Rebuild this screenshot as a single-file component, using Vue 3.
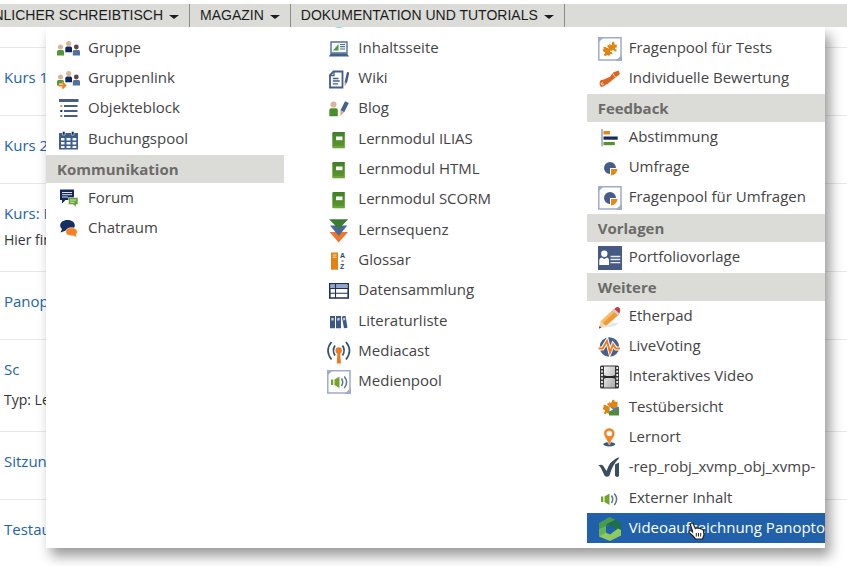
<script setup>
const navItems = [
  { label: 'PERSÖNLICHER SCHREIBTISCH', lead: true },
  { label: 'MAGAZIN' },
  { label: 'DOKUMENTATION UND TUTORIALS' },
]

const courses = [
  { title: 'Kurs 1' },
  { title: 'Kurs 2' },
  { title: 'Kurs: Medien', text: 'Hier finden Sie' },
  { title: 'Panopto' },
  { title: 'Sc', text: 'Typ: Lernen', property: true },
  { title: 'Sitzung' },
  { title: 'Testaufgabe' },
]

const columns = [
  [
    {
      items: [
        { icon: 'group', label: 'Gruppe' },
        { icon: 'grouplink', label: 'Gruppenlink' },
        { icon: 'block', label: 'Objekteblock' },
        { icon: 'calendar', label: 'Buchungspool' },
      ],
    },
    {
      title: 'Kommunikation',
      items: [
        { icon: 'forum', label: 'Forum' },
        { icon: 'chat', label: 'Chatraum' },
      ],
    },
  ],
  [
    {
      items: [
        { icon: 'page', label: 'Inhaltsseite' },
        { icon: 'wiki', label: 'Wiki' },
        { icon: 'blog', label: 'Blog' },
        { icon: 'book', label: 'Lernmodul ILIAS' },
        { icon: 'book', label: 'Lernmodul HTML' },
        { icon: 'book', label: 'Lernmodul SCORM' },
        { icon: 'sequence', label: 'Lernsequenz' },
        { icon: 'glossary', label: 'Glossar' },
        { icon: 'data', label: 'Datensammlung' },
        { icon: 'literature', label: 'Literaturliste' },
        { icon: 'mediacast', label: 'Mediacast' },
        { icon: 'mediapool', label: 'Medienpool' },
      ],
    },
  ],
  [
    {
      items: [
        { icon: 'testpool', label: 'Fragenpool für Tests' },
        { icon: 'scroll', label: 'Individuelle Bewertung' },
      ],
    },
    {
      title: 'Feedback',
      items: [
        { icon: 'poll', label: 'Abstimmung' },
        { icon: 'survey', label: 'Umfrage' },
        { icon: 'surveypool', label: 'Fragenpool für Umfragen' },
      ],
    },
    {
      title: 'Vorlagen',
      items: [{ icon: 'portfolio', label: 'Portfoliovorlage' }],
    },
    {
      title: 'Weitere',
      items: [
        { icon: 'pencil', label: 'Etherpad' },
        { icon: 'voting', label: 'LiveVoting' },
        { icon: 'film', label: 'Interaktives Video' },
        { icon: 'testview', label: 'Testübersicht' },
        { icon: 'pin', label: 'Lernort' },
        { icon: 'vimp', label: '-rep_robj_xvmp_obj_xvmp-' },
        { icon: 'sound', label: 'Externer Inhalt' },
        { icon: 'panopto', label: 'Videoaufzeichnung Panopto', active: true },
      ],
    },
  ],
]
</script>

<template>
  <svg class="sprite" aria-hidden="true">
    <defs>
      <linearGradient id="g-green" x1="0" y1="0" x2="0" y2="1">
        <stop offset="0" stop-color="#3f7f28" /><stop offset="1" stop-color="#5f9a2c" />
      </linearGradient>
      <linearGradient id="g-film" x1="0" y1="0" x2="1" y2="1">
        <stop offset="0" stop-color="#f4f4f4" /><stop offset="1" stop-color="#a9a9a9" />
      </linearGradient>
      <g id="puzzle" fill="#e08512">
        <path d="M11 6.400 13.200 8.200Q14.600 7.400 13.900 5.900Q14.200 4.400 15.800 4.700Q17 5.600 16.300 7.200Q17.200 8 18.800 7.500V10.500Q17.200 10.300 16.700 11.500Q17 12.600 18.700 12.400L18.200 14.600Q16.500 14.500 15.800 13.200Q14.300 12.600 13.600 14L10.800 12.500Q11.800 10.800 10.200 10.400Q8.800 9.600 9.500 8.200Q10.600 7.500 11.600 8.500Z" />
        <path d="M5 10.200 7.800 9.800Q8.400 11.200 9.900 11L12.600 12.800Q11.300 14 12.400 15Q14.200 14.800 14.500 16.400Q13.800 17.900 12.200 17L11 19.300Q9.800 17.500 8.700 18.200Q7.400 19.600 6 18.300Q5.700 16.900 7.200 16.200Q7.300 14.900 5.200 14.600L4.600 12.600Q6.800 12.400 5 10.200Z" />
      </g>
      <g id="frame">
        <path d="M0.800 0.800H23V23H0.800Z" fill="#fff" stroke="#9dacca" stroke-width="1.500" />
        <path d="M0 0H6L0 6ZM24 24H17.500L24 17.500Z" fill="#9dacca" />
      </g>
      <g id="pie">
        <path d="M12 12V18A6 6 0 1 1 18 12Z" fill="#465d89" />
        <path d="M13 13H19.500A6.500 6.500 0 0 1 13 19.500Z" fill="#e58a17" />
      </g>
      <g id="speaker">
        <path d="M3 9.500H5.300V15H3ZM6.500 9.500 11.500 6.500V18L6.500 15Z" fill="#72a32b" />
        <path d="M13.500 8.500Q16 12.300 13.500 16M16.300 6.500Q21 12.300 16.300 18" fill="none" stroke="#5a7391" stroke-width="1.500" />
      </g>
      <g id="people">
        <circle cx="3.500" cy="10" r="2.500" fill="#dab496" />
        <path d="M0 18.500V14.500Q0 13 1.500 13H5.500Q7 13 7 14.500V18.500Z" fill="#57953a" />
        <circle cx="11.700" cy="6.500" r="2.600" fill="#dab496" />
        <path d="M8.300 15.300V11Q8.300 9.500 10 9.500H13.500Q15 9.500 15 11V15.300Z" fill="#10285e" />
        <circle cx="19.300" cy="10" r="2.400" fill="#5e4547" />
        <path d="M15.800 18.500V14.500Q15.800 13 17.300 13H21.500Q23 13 23 14.500V18.500Z" fill="#52729e" />
      </g>
    </defs>

    <symbol id="i-group" viewBox="0 0 24 24"><use href="#people" /></symbol>
    <symbol id="i-grouplink" viewBox="0 0 24 24">
      <use href="#people" />
      <path d="M2 16.500H5V14.500L9.500 18.700 5.500 22.500V20.500H2Z" fill="#fff" />
      <path d="M1.500 18.500H8M5.300 15.300 8.500 18.500 5.300 21.500" fill="none" stroke="#ee8120" stroke-width="1.800" />
    </symbol>
    <symbol id="i-block" viewBox="0 0 24 24">
      <path d="M2 2H21.500V5H2ZM7 8H20.500V10H7ZM7 13H20.500V15H7ZM7 18H20.500V20H7Z" fill="#455d8b" />
      <path d="M3.300 8h2v2h-2z" fill="#d79e45" /><path d="M3.300 13h2v2h-2z" fill="#10285e" /><path d="M3.300 18h2v2h-2z" fill="#57953a" />
    </symbol>
    <symbol id="i-calendar" viewBox="0 0 24 24">
      <path d="M2 5H21V21.500H2Z" fill="#3f5d86" />
      <path d="M4 10H7.500V12.500H4ZM9.500 10H13.500V12.500H9.500ZM15.500 10H19.300V12.500H15.500ZM4 14H7.500V16.500H4ZM9.500 14H13.500V16.500H9.500ZM15.500 14H19.300V16.500H15.500ZM4 18H7.500V20H4ZM9.500 18H13.500V20H9.500ZM15.500 18H19.300V20H15.500Z" fill="#f3f7fa" />
      <path d="M5.500 3.500H8V7H5.500ZM14.500 3.500H17V7H14.500Z" fill="#142b58" stroke="#e6ebf2" stroke-width=".6" />
    </symbol>
    <symbol id="i-forum" viewBox="0 0 24 24">
      <path d="M3 2.500H17V13H8.500L5 16.500V13H3Z" fill="#152a5c" />
      <path d="M5 5.500H15M5 7.700H15M5 10H11" stroke="#dce2ee" />
      <path d="M11.500 10.500H21V17.500H19V20L16 17.500H11.500Z" fill="#65a034" stroke="#fff" stroke-width=".5" />
      <path d="M13 13H19.300M13 15.200H17.500" stroke="#d6e8c4" />
    </symbol>
    <symbol id="i-chat" viewBox="0 0 24 24">
      <path d="M10.500 3C6 3 3.200 5.400 3.200 8.500C3.200 10 4 11.300 5 12L3.500 15.500L8.300 13.700C14 14.500 17.800 12 17.800 8.500C17.800 5.300 15 3 10.500 3Z" fill="#152f63" />
      <path d="M14.500 10.700C11 10.700 8.700 12.600 8.700 14.800C8.700 17.500 11.500 19 15.500 18.700L20 20.300L19 17.500C20 16.800 20.300 15.800 20.300 14.800C20.300 12.500 18 10.700 14.500 10.700Z" fill="#f58220" stroke="#fff" stroke-width=".6" />
    </symbol>
    <symbol id="i-page" viewBox="0 0 24 24">
      <path d="M4 5H20V16H4Z" fill="#f4f8fa" stroke="#53719b" stroke-width="1.400" />
      <path d="M6 13.500 11.500 7V13.500Z" fill="#5b9634" />
      <path d="M13 7.500H18M13 9.700H18M13 12H18" stroke="#53719b" stroke-width="1.200" />
      <path d="M3.800 16.500H20L22 19.500H1.800Z" fill="#3f6385" />
    </symbol>
    <symbol id="i-wiki" viewBox="0 0 24 24">
      <path d="M6.500 4.500H15.500V20.500H3V8Z" fill="#fff" stroke="#445c89" stroke-width="1.800" />
      <path d="M3 8.500H7V4.500M5.800 11.500H11.500M5.800 14H12.700M5.800 16.800H11" stroke="#445c89" stroke-width="1.300" fill="none" />
      <path d="M20 5 22.300 5.500 20 16 17.500 15.500Z" fill="#445c89" /><path d="M17.500 15.500 20 16 17.800 19.300Z" fill="#c79f7c" />
    </symbol>
    <symbol id="i-blog" viewBox="0 0 24 24">
      <circle cx="6.500" cy="7.500" r="3" fill="#dab496" />
      <path d="M2.300 19.300V13Q2.300 11.200 4 11.200H9Q10.800 11.200 10.800 13V19.300Z" fill="#4b8d2d" />
      <path d="M18 4.300 21.800 6 17.200 15.200 13.500 13.200Z" fill="#45618d" />
      <path d="M13.500 13.200 17.200 15.200 13.200 19Z" fill="#d3ab8c" />
    </symbol>
    <symbol id="i-book" viewBox="0 0 24 24">
      <path d="M5.300 5.300Q5.300 4 6.600 4H17.800V20.300H6.500Q5.300 20.300 5.300 19Z" fill="url(#g-green)" />
      <path d="M6 19H17" stroke="#8cba5d" stroke-width=".7" />
      <path d="M9 8.500H15.500V12.200H9Z" fill="#fff" />
    </symbol>
    <symbol id="i-sequence" viewBox="0 0 24 24">
      <path d="M2.500 13H21L11.700 23.500Z" fill="#f1762a" />
      <path d="M3 6.500H20.300L11.700 17Z" fill="#49699b" />
      <path d="M2 .3H21.300L11.700 10Z" fill="#3c7b32" />
    </symbol>
    <symbol id="i-glossary" viewBox="0 0 24 24">
      <path d="M4 3.500H11V20.700H4Z" fill="#e48313" />
      <path d="M5.800 6H9.500M5.800 8.200H9.500" stroke="#fbe5c5" />
    </symbol>
    <symbol id="i-data" viewBox="0 0 24 24">
      <path d="M2.800 4.800H21.200V19H2.800Z" fill="#fff" stroke="#1e3058" stroke-width="1.600" />
      <path d="M3.500 5.500H20.500V9H3.500Z" fill="#8fa5cb" />
      <path d="M3 9.500H21M3 14.300H21M8.500 5V19" stroke="#1e3058" stroke-width="1.100" />
    </symbol>
    <symbol id="i-literature" viewBox="0 0 24 24">
      <path d="M3 6H8V18.300H3ZM9 6H14V18.300H9ZM14.800 6.500 18.500 5.800 20.500 17.700 17 18.300Z" fill="#3c5884" />
      <path d="M4.300 8H6.700V10.500H4.300ZM10.300 8H12.700V10.500H10.300ZM16 8 18 7.700 18.300 10 16.400 10.400Z" fill="#c5d0e2" />
    </symbol>
    <symbol id="i-mediacast" viewBox="0 0 24 24">
      <path d="M8 5.500Q4.800 10.500 8 15.500M15.500 5.500Q18.700 10.500 15.500 15.500" fill="none" stroke="#34506f" stroke-width="1.700" />
      <path d="M4.500 2Q-2.500 10.500 4.500 19.500M19 2Q26 10.500 19 19.500" fill="none" stroke="#34506f" stroke-width="1.700" />
      <circle cx="11.700" cy="10.500" r="3.200" fill="#ef7a24" />
      <path d="M10.500 12H13L14 23.500H9.700Z" fill="#ef7a24" />
    </symbol>
    <symbol id="i-mediapool" viewBox="0 0 24 24"><use href="#frame" /><use href="#speaker" x="1" /></symbol>
    <symbol id="i-testpool" viewBox="0 0 24 24"><use href="#frame" /><use href="#puzzle" /></symbol>
    <symbol id="i-scroll" viewBox="0 0 24 24">
      <path d="M15 5.500 20.500 3.500 22 7 17.500 10.500 9.500 17 6 18 3.500 13.500 12 9.800Z" fill="#df641d" />
      <path d="M2 14Q4 12 6.500 13.500Q8.500 15.500 7.500 18Q5 20.500 2.500 19.500Q.8 17 2 14Z" fill="#df641d" />
      <path d="M6 17Q3.500 19 3 16.800Q3.500 14.700 5 16M14.500 6 17.300 10.300" fill="none" stroke="#f8dcc8" stroke-width=".9" />
    </symbol>
    <symbol id="i-poll" viewBox="0 0 24 24">
      <path d="M4 3V20.300" stroke="#5b7392" /><path d="M5.500 5H12V8.500H5.500Z" fill="#e8881a" />
      <path d="M5.500 10.500H19.700V13.700H5.500Z" fill="#122a5e" /><path d="M5.500 16H16.800V19.200H5.500Z" fill="#57922f" />
    </symbol>
    <symbol id="i-survey" viewBox="0 0 24 24"><use href="#pie" /></symbol>
    <symbol id="i-surveypool" viewBox="0 0 24 24"><use href="#frame" /><use href="#pie" /></symbol>
    <symbol id="i-portfolio" viewBox="0 0 24 24">
      <path d="M0 0H24V24H0Z" fill="#455a83" />
      <circle cx="6.300" cy="7.700" r="3.200" fill="#fff" />
      <path d="M1.300 19V14Q1.300 12 3.500 11.500L6.300 13 9 11.500Q11 12 11 14V19Z" fill="#fff" />
      <path d="M12.500 10.500H22.300M12.500 13.500H22.300M12.500 16.700H22.300" stroke="#e7ebf3" stroke-width="1.300" />
    </symbol>
    <symbol id="i-pencil" viewBox="0 0 24 24">
      <path d="M4 23 14 18.500 21 17.500 17 21Z" fill="#e5e5e5" />
      <path d="M15.500 4.500 21 9.500 8 21 2.500 16.500Z" fill="#f09a36" />
      <path d="M15.500 4.500 17.300 6.200 4.700 18.200 2.500 16.500Z" fill="#f9bd69" />
      <path d="M2.500 16.500 8 21 1 23.500Z" fill="#efd3aa" /><path d="M1.500 21 3.400 22.700 1 23.500Z" fill="#444" />
      <path d="M14.500 5.500 16.200 4 21.300 8.600 19.700 10.300Z" fill="#cbd0d7" />
      <path d="M16.200 4 18.300 2.300Q20.300 1.600 21.500 3Q23 5 21.300 8.600Z" fill="#c63c45" />
    </symbol>
    <symbol id="i-voting" viewBox="0 0 24 24">
      <circle cx="11.400" cy="12" r="9.800" fill="#47608c" />
      <path d="M0 13.500H4.500L9 6 12 17 15 9.500 18 13.500H23" fill="none" stroke="#fff" stroke-width="4" />
      <path d="M.5 13.500H4.500L9 6 12 17.500 15 9.500 17.700 13.500H22" fill="none" stroke="#f27b20" stroke-width="2" />
    </symbol>
    <symbol id="i-film" viewBox="0 0 24 24">
      <rect x="2" y=".5" width="19" height="23" rx="1.500" fill="#363636" />
      <path d="M6 1.500H17V11H6ZM6 13H17V22.500H6Z" fill="url(#g-film)" />
      <path d="M4 2V23M19.200 2V23" stroke="#eee" stroke-width="1.800" stroke-dasharray="2 1.500" />
      <path d="M6 10.200Q11.500 12.500 17 10.200V13.700Q11.500 11.500 6 13.700Z" fill="#242424" />
    </symbol>
    <symbol id="i-testview" viewBox="0 0 24 24">
      <use href="#puzzle" y="-1" />
      <path d="M11 11H21V19.300H11Z" fill="#567a9a" />
      <path d="M11 19.300V16L14 14 16.500 16 21 12.500V19.300Z" fill="#4e8d34" />
      <path d="M11.500 10.500 15 13.500 11.500 15.500Z" fill="#fff" />
      <path d="M14 5 19.500 6V11L15.500 12.500 12 9Z" fill="#e08512" />
    </symbol>
    <symbol id="i-pin" viewBox="0 0 24 24">
      <ellipse cx="11.300" cy="18.300" rx="6" ry="2.200" fill="#3f5985" />
      <path d="M11.300 2A5.500 5.500 0 0 0 5.800 7.500C5.800 11 9.500 13.500 10.800 18.500H11.800C13 13.500 16.800 11 16.800 7.500A5.500 5.500 0 0 0 11.300 2Z" fill="#f18525" stroke="#fff" stroke-width=".4" />
      <circle cx="11.300" cy="7.500" r="2.800" fill="#fff" />
    </symbol>
    <symbol id="i-vimp" viewBox="0 0 24 24">
      <path d="M.2 9.500Q3 7.800 5 9.500L8.500 15Q11.500 5 20.500 1.300Q21.300 1.500 20.500 3Q14.500 8.500 11.500 19.500Q9 22 6.500 19.500L3.200 12.500Q2 10 .2 9.500Z" fill="#394c62" />
      <path d="M17 8.500 21 6.500V20Q18.500 22 17 19.500Z" fill="#394c62" />
    </symbol>
    <symbol id="i-sound" viewBox="0 0 24 24"><use href="#speaker" /></symbol>
    <symbol id="i-panopto" viewBox="0 0 24 24">
      <path d="M11.500 0 17.500 3V7.500L8 9V17L1 19.500V6Z" fill="#4a9a4c" />
      <path d="M8 9V17L1 19.500V12Z" fill="#63b455" />
      <path d="M17.500 2.500 23 6V18.500L17 15V10.500L8 7.500Z" fill="#1f6e4c" />
      <path d="M23 18.500 12 24 1 19.500 8 15.500 12 17.500 20 11.500 23 13Z" fill="#8ccb62" />
      <path d="M8.500 8 16.500 12 9 16.500Z" fill="#2161ab" />
    </symbol>
  </svg>

  <div class="page">
    <nav class="nav">
      <button v-for="n in navItems" :key="n.label" type="button" class="nav-item" :class="{ lead: n.lead }">
        <span class="nav-label">{{ n.label }}</span><span class="caret"></span>
      </button>
    </nav>

    <div class="stage">
      <main class="courses">
        <article v-for="c in courses" :key="c.title" class="course">
          <a href="#" class="course-title">{{ c.title }}</a>
          <p v-if="c.text" class="course-text" :class="{ property: c.property }">{{ c.text }}</p>
        </article>
      </main>

      <div class="menu">
        <div class="columns">
          <div v-for="(column, i) in columns" :key="i" class="column">
            <section v-for="(group, j) in column" :key="j">
              <h2 v-if="group.title" class="heading">{{ group.title }}</h2>
              <ul class="list">
                <li v-for="item in group.items" :key="item.label" class="row">
                  <a href="#" class="item" :class="{ active: item.active }">
                    <svg class="icon" aria-hidden="true">
                      <use :href="'#i-' + item.icon" />
                      <template v-if="item.icon === 'glossary'">
                        <text x="13" y="9" class="az">A</text>
                        <path d="M14.500 12H16.500" stroke="#2c4470" />
                        <text x="13" y="20" class="az">Z</text>
                      </template>
                    </svg>
                    <span>{{ item.label }}</span>
                    <svg v-if="item.active" class="cursor" viewBox="0 0 17 18" aria-hidden="true">
                      <path d="M4.500 9 2.500 3Q2.500 1 4 1Q5 1 5.500 2.500L7.300 6.500Q8 5.500 9 6.300Q10 5.500 11 6.500Q12.300 5.800 13 7Q15 6.700 15.500 9L16 13 14.500 17H7.500L5 14 1 10.500Q.5 9 2 8.500Q3.300 8.500 4.500 10Z" fill="#fff" stroke="#222" stroke-width="1.200" />
                      <path d="M8.300 11V14.500M10.500 11V14.500M12.700 11V14.500" stroke="#222" />
                    </svg>
                  </a>
                </li>
              </ul>
            </section>
          </div>
        </div>
      </div>
    </div>
  </div>
</template>

<style>
body {
  background: #fff;
}
</style>

<style scoped>
.sprite {
  position: absolute;
  width: 0;
  height: 0;
}
.az {
  font: bold 7px 'Liberation Sans', sans-serif;
  fill: #2c4470;
}
.page {
  padding-top: 4px;
  font-family: 'Open Sans', 'Noto Sans', sans-serif;
  font-size: 15px;
  color: #444;
  overflow: hidden;
  min-height: 100vh;
  box-sizing: border-box;
}
.nav {
  position: relative;
  z-index: 2;
  display: flex;
  height: 23px;
  background: #dbdcd7;
}
.nav-item {
  display: flex;
  align-items: center;
  gap: 6px;
  flex: none;
  margin: 0;
  padding: 0 10px 1px;
  border: 0;
  border-right: 1px solid #8b8b88;
  background: none;
  font: 14px/22px 'Liberation Sans', Arial, sans-serif;
  color: #1c1c1c;
  white-space: nowrap;
}
.nav-item.lead {
  justify-content: flex-end;
  width: 190px;
  box-sizing: border-box;
  overflow: hidden;
}
.caret {
  flex: none;
  margin-top: 3px;
  border: 5px solid transparent;
  border-top: 4px solid #1c1c1c;
  border-bottom: 0;
}
.stage {
  position: relative;
}
.courses {
  padding-top: 20px;
}
.course {
  padding: 19px 4px 21px;
  border-top: 1px solid #e8e8e8;
}
.course-title {
  display: block;
  margin-bottom: 7px;
  line-height: 20px;
  color: #1e63a8;
  text-decoration: none;
}
.course-text {
  margin: 0;
  font-size: 14px;
  line-height: 20px;
  color: #333;
}
.course-text.property {
  padding-top: 4px;
}
.menu {
  position: absolute;
  top: 0;
  left: 46px;
  right: 22px;
  padding: 6px 0 5px;
  background: #fff;
  box-shadow: 5px 8px 12px rgba(0, 0, 0, 0.4);
}
.columns {
  display: grid;
  grid-template-columns: repeat(3, minmax(0, 1fr));
  gap: 32px;
}
.column:nth-child(2)::before {
  content: '';
  position: absolute;
  top: -2px;
  margin-left: 19px;
  width: 8px;
  height: 3px;
  border-radius: 50%;
  background: #8fdcec;
}
.heading {
  margin: 1px 0 0;
  padding: 0 11px;
  background: #dbdcd7;
  font-size: 15px;
  line-height: 28px;
  font-weight: 700;
  color: #6b6b69;
}
.list {
  margin: 0;
  padding: 0;
  list-style: none;
}
/* Every third row gets a hairline of extra space below it. */
.row:nth-child(3n) {
  padding-bottom: 1px;
}
.item {
  position: relative;
  display: flex;
  align-items: center;
  gap: 7px;
  box-sizing: border-box;
  height: 30px;
  padding: 0 0 2px 11px;
  overflow: hidden;
  color: #444;
  text-decoration: none;
  white-space: nowrap;
}
.item.active {
  background: #2161ab;
  color: #fff;
}
.icon {
  flex: none;
  width: 24px;
  height: 24px;
  margin-top: 3px;
}
.cursor {
  position: absolute;
  left: 101px;
  top: 9px;
  width: 17px;
  height: 18px;
}
</style>
